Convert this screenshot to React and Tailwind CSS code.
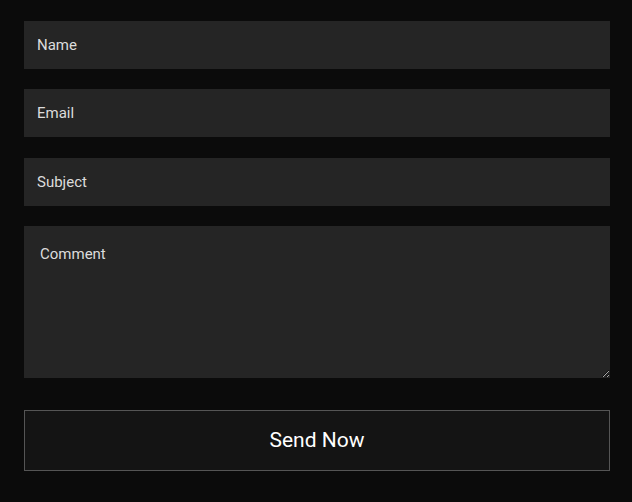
import React from "react";

const fields = ["Name", "Email", "Subject"];

const App = () => {
  return (
    <div
      className="min-h-[502px] w-full bg-[#0b0b0b] pl-6 pr-[22px] pt-[21px] pb-[31px] [color-scheme:dark]"
      style={{ fontFamily: "Roboto, 'Liberation Sans', sans-serif" }}
    >
      <form className="flex flex-col" onSubmit={(e) => e.preventDefault()}>
        <div className="flex flex-col gap-5">
          {fields.map((f, i) => (
            <input
              key={f}
              type="text"
              placeholder={f}
              className={
                "h-12 w-full bg-[#252525] px-[13px] text-[15px] text-[#e0e0e0] outline-none placeholder:text-[#dcdcdc] " +
                (i === 2 ? "mt-px" : "")
              }
            />
          ))}
          <textarea
            placeholder="Comment"
            className="h-[152px] w-full bg-[#252525] px-4 pt-[18px] text-[15px] leading-[20px] text-[#e0e0e0] outline-none placeholder:text-[#dcdcdc]"
          />
        </div>
        <button
          type="submit"
          className="mt-8 h-[61px] w-full border border-[#555555] bg-[#141414] text-[21px] text-white"
        >
          Send Now
        </button>
      </form>
    </div>
  );
};

export default App;
